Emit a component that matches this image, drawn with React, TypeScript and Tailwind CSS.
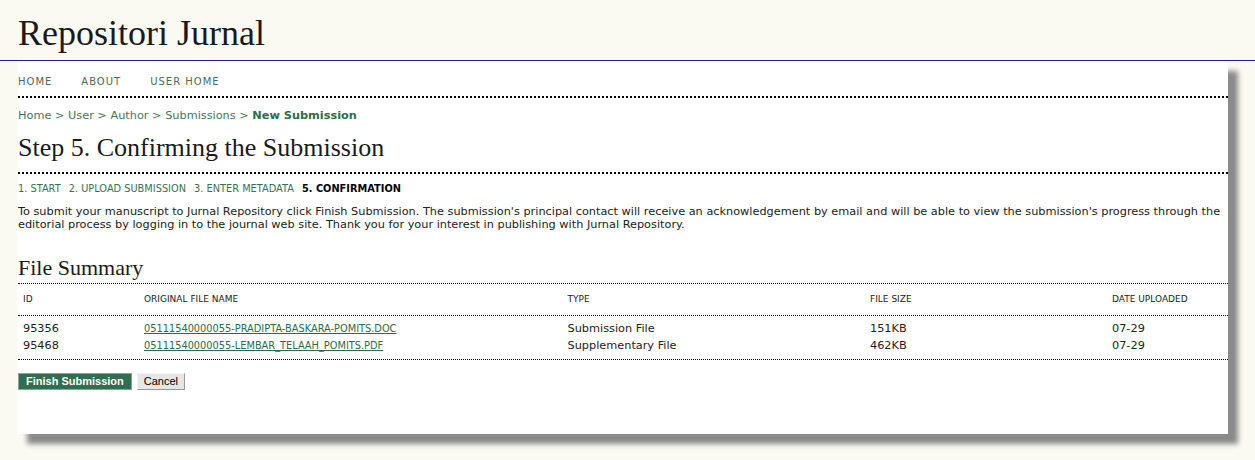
import React from "react";

const serif = { fontFamily: '"Liberation Serif", "DejaVu Serif", serif' };

const files = [
  { id: "95356", name: "05111540000055-PRADIPTA-BASKARA-POMITS.DOC", type: "Submission File", size: "151KB", date: "07-29" },
  { id: "95468", name: "05111540000055-LEMBAR_TELAAH_POMITS.PDF", type: "Supplementary File", size: "462KB", date: "07-29" },
];

const cols = "grid grid-cols-[10%_35%_25%_20%_10%]";

export default function App() {
  return (
    <div className="min-h-screen bg-[#fafaf3] text-[#222] font-['DejaVu_Sans',Verdana,sans-serif]">
      <header className="h-[60px] pl-[18px] pt-[13px]">
        <h1 className="text-[36px] leading-[40px] text-[#1a1a1a]" style={serif}>
          Repositori Jurnal
        </h1>
      </header>
      <div className="border-b border-[#1c1c9c]" />

      <div className="pl-[17px] pr-[27px]">
        <main className="bg-white pl-[1px] pb-[44px] shadow-[10px_10px_5px_#8a8a8a]">
          {/* top nav */}
          <nav className="flex gap-[29px] pt-[14px] pb-[7px] border-b-2 border-dotted border-black text-[10px] leading-[14px] tracking-[1px] text-[#4e6b5c]">
            <a>HOME</a>
            <a>ABOUT</a>
            <a>USER HOME</a>
          </nav>

          <div className="mt-[11px] text-[11.3px] leading-[14px] text-[#47755e]">
            <a>Home</a> &gt; <a>User</a> &gt; <a>Author</a> &gt; <a>Submissions</a> &gt;{" "}
            <a className="font-bold text-[#2f6a4e]">New Submission</a>
          </div>

          <h2 className="mt-[11px] pb-[10px] border-b-2 border-dotted border-black text-[26px] leading-[28px] text-[#1a1a1a]" style={serif}>
            Step 5. Confirming the Submission
          </h2>

          <div className="mt-[8px] flex gap-[8px] text-[9.8px] leading-[13px] text-[#3d6e58]">
            <a>1. START</a>
            <a>2. UPLOAD SUBMISSION</a>
            <a>3. ENTER METADATA</a>
            <span className="font-bold text-black">5. CONFIRMATION</span>
          </div>

          <p className="mt-[10px] text-[11.3px] leading-[13px]">
            To submit your manuscript to Jurnal Repository click Finish Submission. The submission's principal contact will
            receive an acknowledgement by email and will be able to view the submission's progress through the editorial
            process by logging in to the journal web site. Thank you for your interest in publishing with Jurnal Repository.
          </p>

          <h3 className="mt-[24px] pb-[3px] border-b border-dotted border-black text-[22px] leading-[25px] text-[#1a1a1a]" style={serif}>
            File Summary
          </h3>

          <div className={`${cols} h-[32px] items-center border-b border-dotted border-black text-[9px] text-[#222]`}>
            <div className="pl-[5px]">ID</div>
            <div className="pl-[5px]">ORIGINAL FILE NAME</div>
            <div className="pl-[5px]">TYPE</div>
            <div className="pl-[5px]">FILE SIZE</div>
            <div className="pl-[5px]">DATE UPLOADED</div>
          </div>

          <div className="pt-[5px] pb-[4px] border-b border-dotted border-black text-[11.3px]">
            {files.map((f) => (
              <div key={f.id} className={`${cols} h-[17px] items-center`}>
                <div className="pl-[5px]">{f.id}</div>
                <div className="pl-[5px]">
                  <a className="underline text-[9.8px] text-[#2f6a4e]">{f.name}</a>
                </div>
                <div className="pl-[5px]">{f.type}</div>
                <div className="pl-[5px]">{f.size}</div>
                <div className="pl-[5px]">{f.date}</div>
              </div>
            ))}
          </div>

          <div className="mt-[13px] flex gap-[5px] font-['Liberation_Sans',Arial,sans-serif] text-[11px]">
            <button className="h-[17px] px-[7px] leading-[15px] bg-[#2f6e4f] text-white font-bold border border-[#8aa595]">
              Finish Submission
            </button>
            <button className="h-[17px] px-[6px] leading-[15px] bg-[#e6e6e6] text-black border border-t-[#f4f4f4] border-l-[#f4f4f4] border-r-[#999] border-b-[#999]">
              Cancel
            </button>
          </div>
        </main>
      </div>
    </div>
  );
}
